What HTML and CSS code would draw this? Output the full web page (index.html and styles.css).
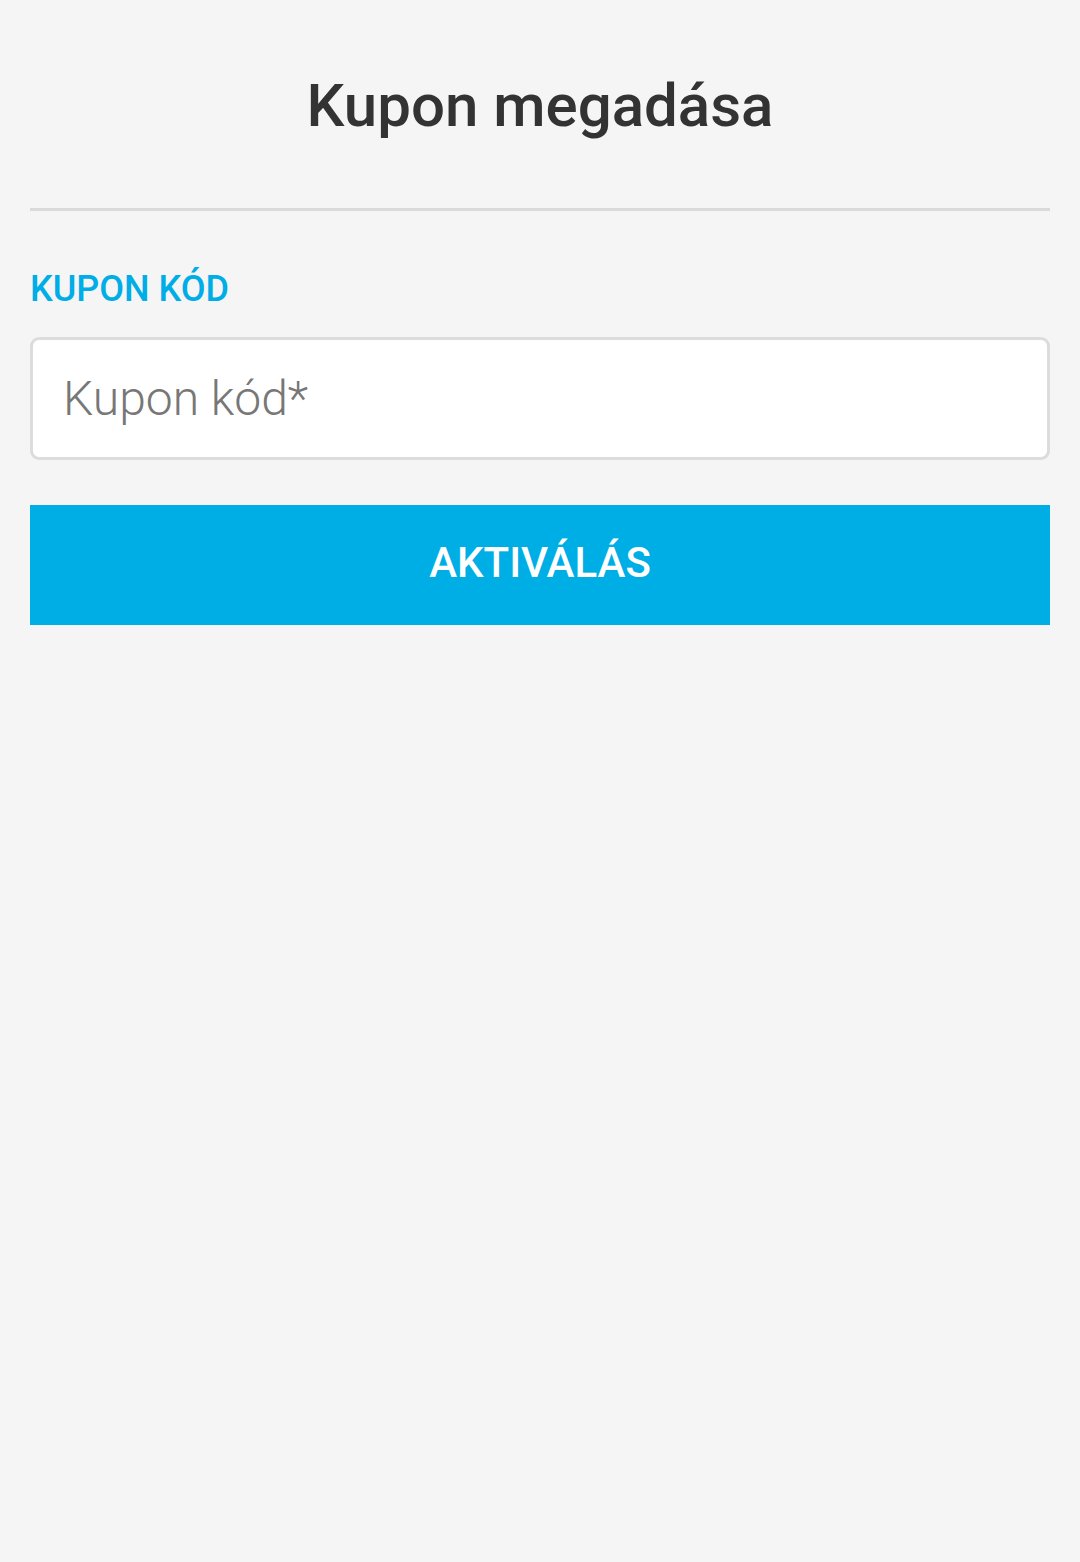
FILE: index.html
```html
<!DOCTYPE html>
<html lang="hu">
<head>
    <meta charset="UTF-8">
    <meta name="viewport" content="width=device-width, initial-scale=1.0">
    <title>Kupon megadása</title>
    <link rel="stylesheet" href="styles.css">
</head>
<body>
    <div class="page">
        <h1 class="title">Kupon megadása</h1>
        <form class="coupon-form">
            <label for="code" class="label">KUPON KÓD</label>
            <input type="text" id="code" name="code" class="input" placeholder="Kupon kód*">
            <button type="submit" class="button">AKTIVÁLÁS</button>
        </form>
    </div>
</body>
</html>
```

FILE: styles.css
```css
body { margin: 0; background: #f5f5f5; font-family: Roboto, "Liberation Sans", sans-serif; }
.page { padding: 0 30px; }
.title { margin: 0; padding: 71px 0 67px; text-align: center; font-size: 60px; line-height: 70px; font-weight: 500; color: #333; border-bottom: 3px solid #dadada; }
.coupon-form { display: flex; flex-direction: column; }
.label { margin-top: 56px; font-size: 36px; line-height: 44px; font-weight: 500; color: #00ade6; }
.input { margin-top: 26px; height: 123px; box-sizing: border-box; padding: 0 30px; border: 3px solid #dcdcdc; border-radius: 9px; background: #fff; font-family: inherit; font-size: 48px; font-weight: 300; color: #333; outline: none; }
.input::placeholder { color: #777; }
.button { margin-top: 45px; height: 120px; padding: 0 0 6px; border: none; background: #00aee6; color: #fff; font-family: inherit; font-size: 42px; font-weight: 500; cursor: pointer; }
```
